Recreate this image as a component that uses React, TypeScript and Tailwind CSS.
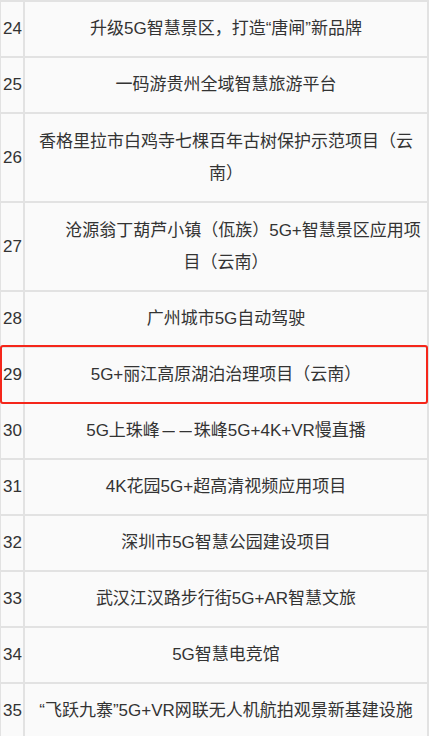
import React from 'react';

type Row = { no: number; lines: React.ReactNode[]; hl?: boolean };

// full-width dash cell, like the CJK font draws it
const Dash = () => (
  <span className="inline-block w-[17px] text-center">
    <span className="inline-block scale-x-[0.72]">—</span>
  </span>
);

const rows: Row[] = [
  { no: 24, lines: ['升级5G智慧景区，打造“唐闸”新品牌'] },
  { no: 25, lines: ['一码游贵州全域智慧旅游平台'] },
  { no: 26, lines: ['香格里拉市白鸡寺七棵百年古树保护示范项目（云', '南）'] },
  { no: 27, lines: ['\u3000\u3000沧源翁丁葫芦小镇（佤族）5G+智慧景区应用项', '目（云南）'] },
  { no: 28, lines: ['广州城市5G自动驾驶'] },
  { no: 29, lines: ['5G+丽江高原湖泊治理项目（云南）'], hl: true },
  { no: 30, lines: [<>5G上珠峰<Dash /><Dash />珠峰5G+4K+VR慢直播</>] },
  { no: 31, lines: ['4K花园5G+超高清视频应用项目'] },
  { no: 32, lines: ['深圳市5G智慧公园建设项目'] },
  { no: 33, lines: ['武汉江汉路步行街5G+AR智慧文旅'] },
  { no: 34, lines: ['5G智慧电竞馆'] },
  { no: 35, lines: ['“飞跃九寨”5G+VR网联无人机航拍观景新基建设施'] },
];

export default function App() {
  return (
    <div className="w-[429px] h-[736px] overflow-hidden bg-[#fafafa] font-['Liberation_Sans','Noto_Sans_CJK_SC',sans-serif] text-[17px] leading-[32px] text-[#333]">
      <div className="border-t-2 border-l border-r-2 border-[#e2e2e2]">
        {rows.map((r) => (
          <div
            key={r.no}
            className={`relative flex border-b-2 border-[#e2e2e2] ${r.lines.length > 1 ? 'h-[89px]' : 'h-[56px]'}`}
          >
            {/* index column */}
            <div className="w-[24px] shrink-0 border-r-2 border-[#e2e2e2] flex items-center pl-[2px]">
              {r.no}
            </div>
            {/* project name */}
            <div className="flex-1 flex flex-col items-center justify-center text-center">
              {r.lines.map((l, i) => (
                <div key={i} className="whitespace-pre">
                  {l}
                </div>
              ))}
            </div>
            {r.hl && (
              <div className="absolute -top-[3px] -bottom-[2px] -left-[1px] -right-[1px] border-2 border-[#f5261a] rounded-[3px] pointer-events-none" />
            )}
          </div>
        ))}
      </div>
    </div>
  );
}
